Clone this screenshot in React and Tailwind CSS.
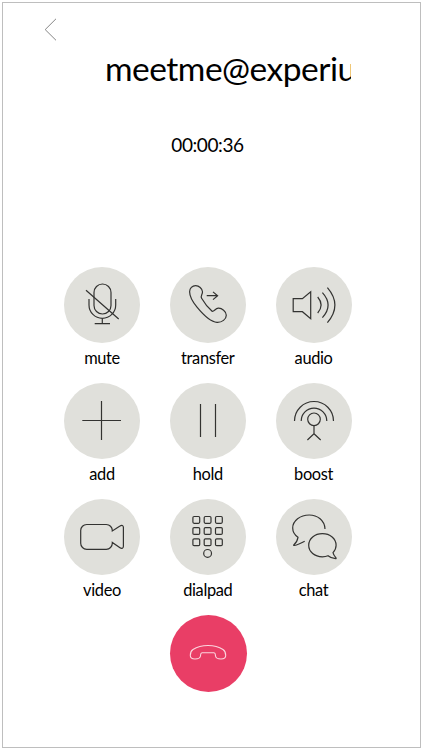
const icons = {
  mute: (
    <>
      <rect x="30" y="17" width="17" height="30" rx="8.5" />
      <path d="M25 32v6a13.35 13.35 0 0 0 26.7 0v-6M38.3 51.3v5.4M30.7 56.7H46M22 23.3l32.7 28.7" />
    </>
  ),
  transfer: (
    <>
      <path d="M31.6 31.3c-1.5-2 1-3.8.9-6.5-.4-3.3-3.4-6.1-6.9-6.1-3.3 0-6 2.5-6 6 0 4.5 3 10 7.4 15.5 5.5 6.7 13.5 14.8 20 15.2 5 .2 9.3-3.2 9.3-7.2 0-3.9-4.5-7.2-8-7-3.1.2-3.9 3.4-6.2 3.1C39.5 42 34 35.5 31.6 31.3z" />
      <path d="M36.7 28.7h10.9M43 24.9l4.6 3.8-4.6 3.9" />
    </>
  ),
  audio: (
    <path d="M17.2 31.7h9.2l8.3-7v27l-8.3-7h-9.2zM41.7 30q6.8 8 0 16M46.4 25.7q11.4 12.5 0 25M51.4 20.7q15 17.5 0 35" />
  ),
  add: <path d="M37.5 18v39M18.3 37.5H57" />,
  hold: <path d="M30.5 21v33M45.5 21v33" />,
  boost: (
    <>
      <circle cx="38" cy="36.3" r="6.3" />
      <path d="M18.5 38a19.5 19.5 0 0 1 39 0M25.2 38a12.8 12.8 0 0 1 25.6 0M38 42.7v8l-6.6 6.3M38 50.7L44.7 57" />
    </>
  ),
  video: (
    <path d="M48.3 32v-.5a6 6 0 0 0-6-6H22.7a6 6 0 0 0-6 6v12.8a6 6 0 0 0 6 6h19.6a6 6 0 0 0 6-6v-.8l7.7 5.3c1.8 1.2 3.4.5 3.4-1.5V28.5c0-2-1.6-2.8-3.4-1.5z" />
  ),
  dialpad: (
    <>
      {[17.5, 28.6, 39.8].map((y) =>
        [22.9, 34.2, 45.5].map((x) => (
          <rect key={`${x}-${y}`} x={x} y={y} width="6.8" height="6.8" rx="1.2" />
        ))
      )}
      <circle cx="37.6" cy="54.4" r="3.9" />
    </>
  ),
  chat: (
    <>
      <path d="M49 30C48.7 21.5 41.5 16 33.2 16 24.2 16 16.7 21.8 16.7 29c0 3.8 2 7 5.3 9.3-.5 2.7-1.8 5.7-4.1 7.4-.5.5-.2.9.4.8 3.7-.6 7-2.3 10.4-4.2" />
      <path d="M57 53.7c1.9-1.9 3.1-4.5 3.1-7.4 0-6.6-6-11.6-13.7-11.6s-13.7 5-13.7 11.6 6 11.5 13.7 11.5c2 0 3.9-.3 5.6-1 2.2 1.8 4.8 2.8 7.6 2.9.5 0 .7-.4.4-.8-1.4-1.5-2.6-3.2-3-5.2z" />
    </>
  ),
};

const actions = ['mute', 'transfer', 'audio', 'add', 'hold', 'boost', 'video', 'dialpad', 'chat'];

const CallButton = ({ name }) => (
  <button type="button" className="flex flex-col items-center">
    <span className="size-[76px] rounded-full bg-[#e0e0db]">
      <svg viewBox="0 0 76 76" className="size-[76px]" fill="none" stroke="#333331" strokeWidth="1.2">
        {icons[name]}
      </svg>
    </span>
    <span className="mt-[3px] mb-px text-[16.4px] leading-6 tracking-[-0.35px]">{name}</span>
  </button>
);

const App = () => {
  return (
    <div className="h-[750px] w-[422px] pt-0.5 pl-0.5 pr-px pb-0.5 bg-white text-black font-['Lato',sans-serif]">
      <main className="h-full border border-[#bebebe] flex flex-col">
        <header className="h-[41px] pt-[15px] pl-[41px] shrink-0">
          <button type="button" aria-label="Back" className="block">
            <svg width="13" height="23" viewBox="0 0 13 23" fill="none" stroke="#777" strokeWidth="0.9">
              <path d="M12 .8L1.2 11.6 12 22.3" />
            </svg>
          </button>
        </header>

        <h1 className="ml-[102px] w-[246px] h-[48px] overflow-hidden whitespace-nowrap text-[33.5px] leading-[48px] tracking-[-0.5px] shrink-0">
          meetme@experiu
        </h1>
        <p className="mt-[41px] pr-[8px] text-center text-[19px] leading-6 tracking-[-0.4px]">00:00:36</p>

        <div className="mt-[110px] ml-[61px] grid grid-cols-[76px_76px_76px] gap-x-[29.8px] gap-y-3">
          {actions.map((name) => (
            <CallButton key={name} name={name} />
          ))}
        </div>

        <button
          type="button"
          aria-label="End call"
          className="mt-3 ml-[167px] size-[77px] rounded-full bg-[#e93e66] shrink-0"
        >
          <svg viewBox="0 0 77 77" className="size-[77px]" fill="none" stroke="#fbd5de" strokeWidth="1.1">
            <path d="M20.3 40.5c0-2.7.7-4.7 2.7-6 4-2.6 9-4 15-4s11 1.4 15 4c2 1.3 2.7 3.3 2.7 6 0 2.2-1.7 3.5-4.7 3.5-3.2 0-5.2-.8-5.5-3-.2-2 0-3.3-1.5-3.3H32c-1.5 0-1.3 1.3-1.5 3.3-.3 2.2-2.3 3-5.5 3s-4.7-1.3-4.7-3.5z" />
          </svg>
        </button>
      </main>
    </div>
  );
};

export default App;
